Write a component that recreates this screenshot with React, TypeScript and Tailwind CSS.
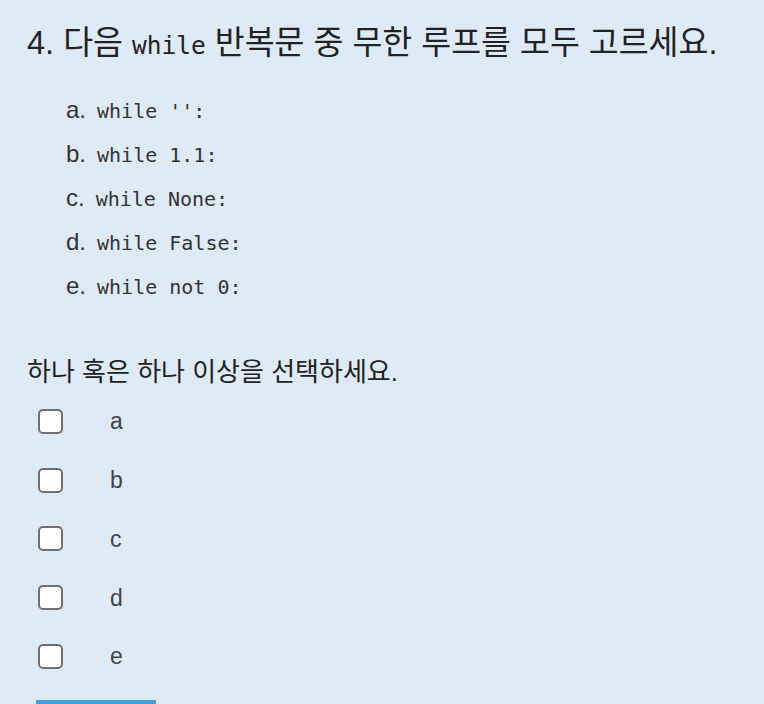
import React from 'react'

const sans = { fontFamily: '"Liberation Sans", "Noto Sans CJK KR", sans-serif' }

const options = [
  { key: 'a', code: "while '':" },
  { key: 'b', code: 'while 1.1:' },
  { key: 'c', code: 'while None:' },
  { key: 'd', code: 'while False:' },
  { key: 'e', code: 'while not 0:' },
]

export default function App() {
  return (
    <div
      className="min-h-[704px] h-[704px] overflow-hidden bg-[#deebf7] pl-[27px] pt-[23px] text-[#222]"
      style={sans}
    >
      <h1 className="h-[40px] text-[32.5px] leading-[40px] font-normal">
        4. 다음 <code className="font-['DejaVu_Sans_Mono',monospace] text-[24.5px]">while</code> 반복문 중 무한 루프를 모두 고르세요.
      </h1>

      <ol className="mt-[25px] pl-[39px] flex flex-col">
        {options.map((o) => (
          <li key={o.key} className="flex items-baseline h-[44px] pt-[8px] text-[24px] leading-[28px] text-[#333]">
            <span>{o.key}.</span>
            <code className="ml-[11px] font-['DejaVu_Sans_Mono',monospace] text-[20px] text-[#333]">{o.code}</code>
          </li>
        ))}
      </ol>

      <p className="mt-[46px] h-[36px] text-[26px] leading-[36px] text-[#222]">하나 혹은 하나 이상을 선택하세요.</p>

      <div className="mt-[2px] flex flex-col">
        {options.map((o) => (
          <label key={o.key} className="flex items-center h-[58.75px]">
            <span className="ml-[11px] w-[25px] h-[25px] rounded-[5px] border-2 border-[#707070] bg-white" />
            <span className="ml-[47px] text-[23px] leading-[28px] text-[#444]">{o.key}</span>
          </label>
        ))}
      </div>

      <div className="ml-[9px] mt-[14px] w-[120px] h-[8px] bg-[#45a0e0]" />
    </div>
  )
}
